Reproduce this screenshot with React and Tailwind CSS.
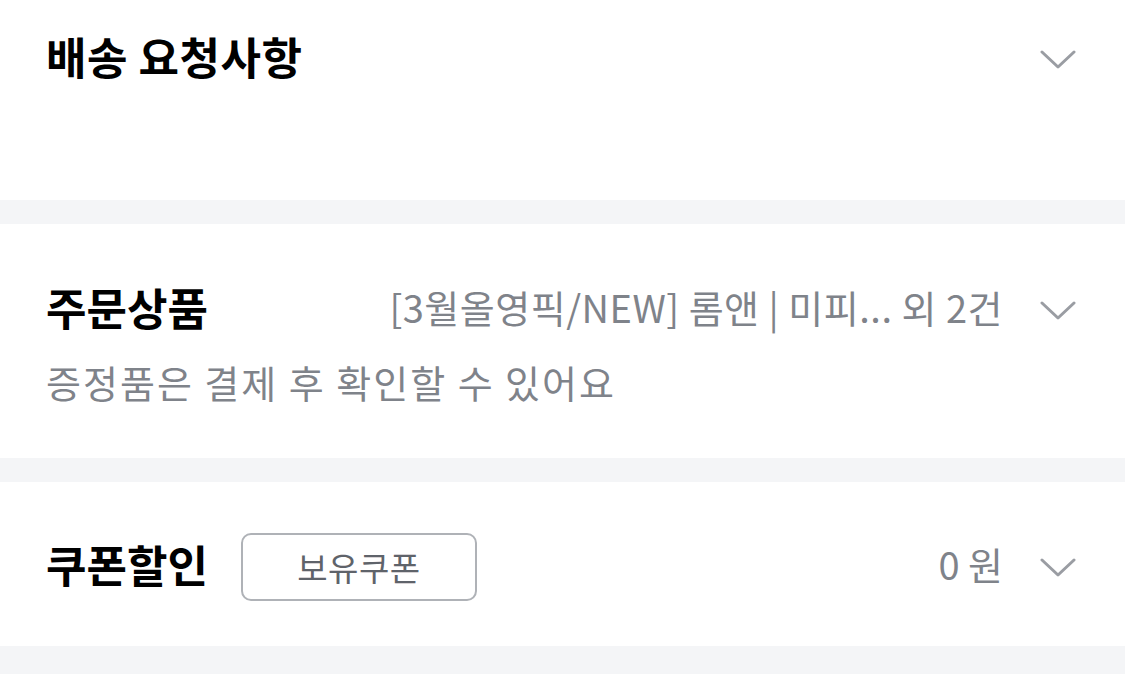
import React from 'react';

const font = { fontFamily: '"Noto Sans CJK KR", "Noto Sans", sans-serif' };

function Chevron() {
  return (
    <svg width="36" height="20" viewBox="0 0 36 20" className="shrink-0 mt-[7px]">
      <path d="M2 2 L18 17 L34 2" fill="none" stroke="#9a9da3" strokeWidth="3" strokeLinecap="round" strokeLinejoin="round" />
    </svg>
  );
}

function Divider() {
  return <div className="h-[24px] bg-[#f4f5f7]" />;
}

export default function App() {
  return (
    <div className="w-[1125px] h-[674px] bg-white overflow-hidden" style={font}>
      <section className="h-[200px] pl-[46px] pr-[49px] pt-[30px]">
        <div className="flex items-center justify-between h-[52px]">
          <h2 className="text-[44px] leading-[52px] font-bold text-black tracking-[0.5px]">배송 요청사항</h2>
          <Chevron />
        </div>
      </section>

      <Divider />

      <section className="h-[234px] pl-[46px] pr-[49px] pt-[57px]">
        <div className="flex items-center justify-between h-[52px]">
          <h2 className="text-[44px] leading-[52px] font-bold text-black">주문상품</h2>
          <div className="flex items-center gap-[37px]">
            <span className="text-[38px] leading-[46px] text-[#7f838a] tracking-[0.5px]">
              [3월올영픽/NEW] 롬앤 | 미피... 외 2건
            </span>
            <Chevron />
          </div>
        </div>
        <p className="mt-[26px] text-[38px] leading-[46px] text-[#7f838a] tracking-[2px]">
          증정품은 결제 후 확인할 수 있어요
        </p>
      </section>

      <Divider />

      <section className="h-[164px] pl-[46px] pr-[49px] flex items-center justify-between">
        <div className="flex items-center gap-[33px]">
          <h2 className="text-[44px] leading-[52px] font-bold text-black">쿠폰할인</h2>
          <button className="w-[236px] h-[68px] mt-[6px] rounded-[10px] border-2 border-[#afb2b7] text-[33px] leading-[40px] text-[#5f636a] tracking-[0.5px]">
            보유쿠폰
          </button>
        </div>
        <div className="flex items-center gap-[37px]">
          <span className="text-[38px] leading-[46px] text-[#7f838a]">0 원</span>
          <Chevron />
        </div>
      </section>

      <div className="h-[28px] bg-[#f4f5f7]" />
    </div>
  );
}
